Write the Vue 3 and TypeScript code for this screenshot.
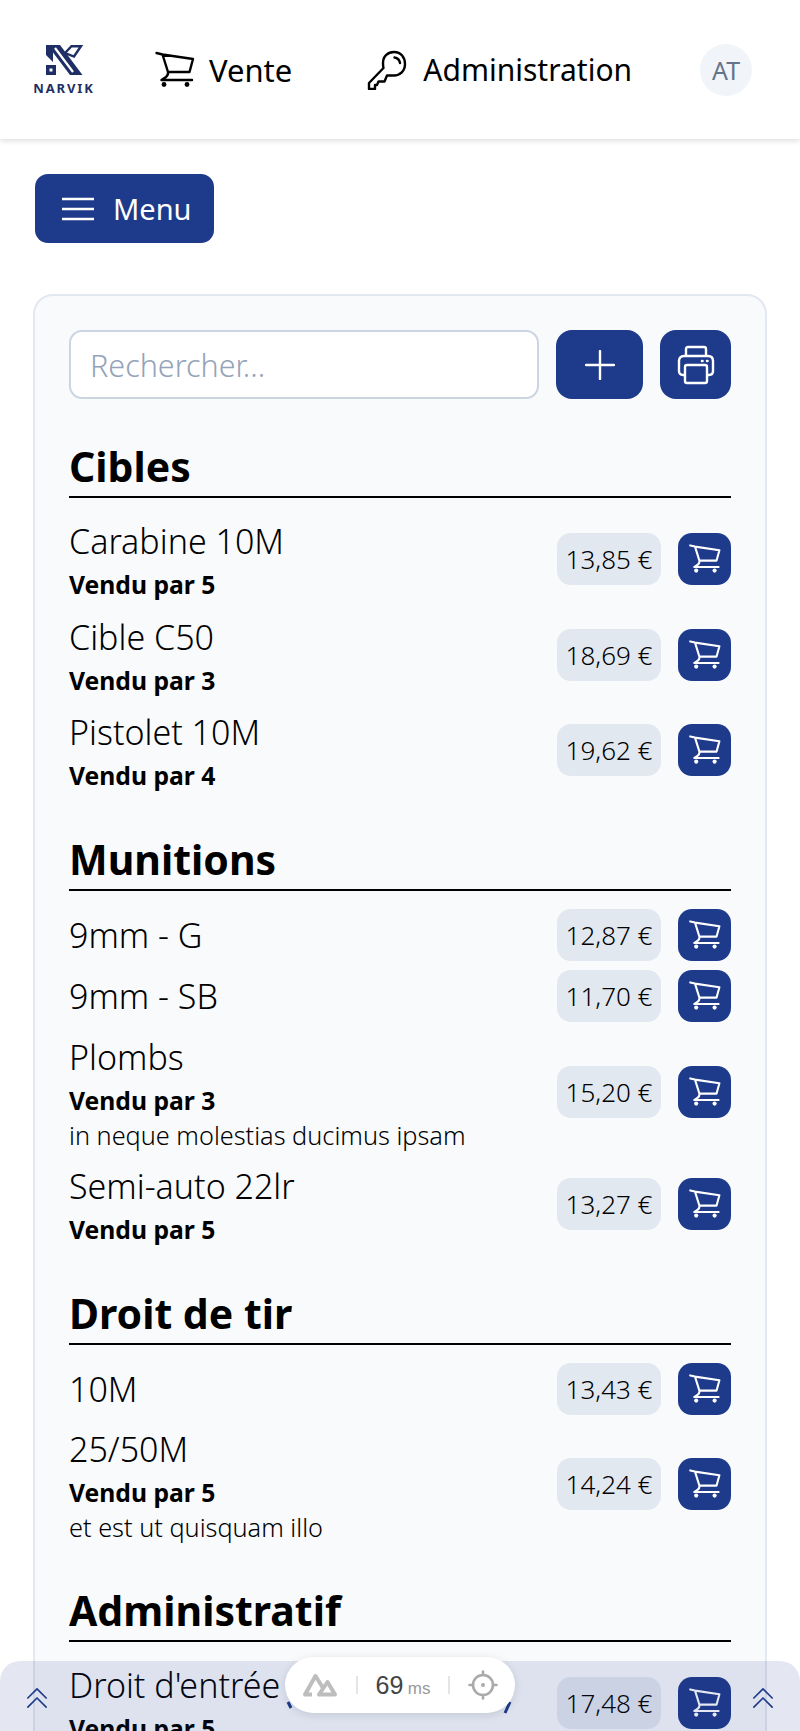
<script setup lang="ts">
interface Product {
  name: string
  price: string
  lot?: number
  note?: string
}

const sections: { title: string; items: Product[] }[] = [
  {
    title: 'Cibles',
    items: [
      { name: 'Carabine 10M', price: '13,85 €', lot: 5 },
      { name: 'Cible C50', price: '18,69 €', lot: 3 },
      { name: 'Pistolet 10M', price: '19,62 €', lot: 4 },
    ],
  },
  {
    title: 'Munitions',
    items: [
      { name: '9mm - G', price: '12,87 €' },
      { name: '9mm - SB', price: '11,70 €' },
      { name: 'Plombs', price: '15,20 €', lot: 3, note: 'in neque molestias ducimus ipsam' },
      { name: 'Semi-auto 22lr', price: '13,27 €', lot: 5 },
    ],
  },
  {
    title: 'Droit de tir',
    items: [
      { name: '10M', price: '13,43 €' },
      { name: '25/50M', price: '14,24 €', lot: 5, note: 'et est ut quisquam illo' },
    ],
  },
  {
    title: 'Administratif',
    items: [{ name: "Droit d'entrée", price: '17,48 €', lot: 5 }],
  },
]

const cartPath = 'M1.5 3 L7.5 4.5 L38 9 L34.5 22 H13 M7.5 4.5 L13 22 Q13.5 25 11 27 L6.5 30 H37'
</script>

<template>
  <div class="page">
    <header class="topbar">
      <div class="brand">
        <svg class="logo" viewBox="0 0 40 31" aria-hidden="true">
          <path d="M0 0 H14 L36.5 30 H24 L7 7.5 V17 L0 10 Z" fill="#1f2f66" />
          <path d="M9 3 L27 27" stroke="#fff" stroke-width="2.2" fill="none" />
          <path d="M0 20 H10 V30 H0 Z M3.5 23.5 V26.5 H6.5 V23.5 Z" fill="#1f2f66" fill-rule="evenodd" />
          <path d="M19 8 L25.5 1.2 H35 L28 11.5 Z" fill="none" stroke="#1f2f66" stroke-width="2.4" />
        </svg>
        <span class="brand-name">NARVIK</span>
      </div>
      <a class="nav-link nav-sale">
        <svg class="nav-icon" viewBox="0 0 40 40" fill="none" stroke="#000" stroke-width="2.4" stroke-linecap="round" stroke-linejoin="round">
          <path :d="cartPath" />
          <circle cx="9" cy="34.5" r="2.4" fill="#000" stroke="none" />
          <circle cx="32" cy="34.5" r="2.4" fill="#000" stroke="none" />
        </svg>
        Vente
      </a>
      <a class="nav-link nav-admin">
        <svg class="nav-icon" viewBox="17 9 40 40" fill="none" stroke="#000" stroke-width="2.4" stroke-linejoin="round" stroke-linecap="round">
          <path d="M33 22 C33 15 38 11 44 11 C51 11 55 16.5 55 23 C55 30 50 34.5 44 34.5 H37 L34.5 40.5 H28.5 L27 44 H25 V48 H19 V42 L33.5 27 C33 25 33 23 33 22 Z" />
          <path d="M44.5 16.5 C47.5 17 49.5 19 50 22" />
        </svg>
        Administration
      </a>
      <div class="avatar">AT</div>
    </header>

    <main class="content">
      <button class="menu-btn">
        <svg class="menu-icon" viewBox="0 0 32 24" fill="none" stroke="#fff" stroke-width="2.4">
          <path d="M0 2 H32 M0 12 H32 M0 22 H32" />
        </svg>
        Menu
      </button>

      <section class="card">
        <div class="toolbar">
          <input class="search" type="text" placeholder="Rechercher..." />
          <button class="tool-btn add">
            <svg width="30" height="30" viewBox="0 0 30 30" stroke="#fff" stroke-width="2.4" stroke-linecap="round">
              <path d="M15 1 V29 M1 15 H29" />
            </svg>
          </button>
          <button class="tool-btn print">
            <svg width="38" height="40" viewBox="0 0 38 40" fill="none" stroke="#fff" stroke-width="2.4" stroke-linejoin="round">
              <path d="M9 11 V4 Q9 2 11 2 H27 Q29 2 29 4 V11" />
              <path d="M8 30 H6 Q2 30 2 26 V16 Q2 11 7 11 H31 Q36 11 36 16 V26 Q36 30 32 30 H30" />
              <path d="M8 22 Q8 20 10 20 H28 Q30 20 30 22 V36 Q30 38 28 38 H10 Q8 38 8 36 Z" />
              <path d="M25 16 H25.5 M30 16 H30.5" stroke-linecap="round" stroke-width="2.6" />
            </svg>
          </button>
        </div>

        <div v-for="section in sections" :key="section.title" class="group">
          <h3 class="group-title">{{ section.title }}</h3>
          <div class="rows">
            <div v-for="item in section.items" :key="item.name" class="row">
              <div class="info">
                <div class="name">{{ item.name }}</div>
                <div v-if="item.lot" class="lot">Vendu par {{ item.lot }}</div>
                <div v-if="item.note" class="note">{{ item.note }}</div>
              </div>
              <div class="price">{{ item.price }}</div>
              <button class="cart-btn">
                <svg width="32" height="32" viewBox="0 0 40 40" fill="none" stroke="#fff" stroke-width="2.6" stroke-linecap="round" stroke-linejoin="round">
                  <path :d="cartPath" />
                  <circle cx="9" cy="34.5" r="2.6" fill="#fff" stroke="none" />
                  <circle cx="32" cy="34.5" r="2.6" fill="#fff" stroke="none" />
                </svg>
              </button>
            </div>
          </div>
        </div>
      </section>
    </main>

    <div class="scroll-bar">
      <svg class="chevrons" viewBox="0 0 24 24" fill="none" stroke="#1e3a8a" stroke-width="1.8" stroke-linecap="round" stroke-linejoin="round">
        <path d="M2 12 L12 2 L22 12 M2 22 L12 12 L22 22" />
      </svg>
      <svg class="chevrons" viewBox="0 0 24 24" fill="none" stroke="#1e3a8a" stroke-width="1.8" stroke-linecap="round" stroke-linejoin="round">
        <path d="M2 12 L12 2 L22 12 M2 22 L12 12 L22 22" />
      </svg>
    </div>

    <svg class="peek" width="800" height="40" viewBox="0 0 800 40" fill="none" stroke="#1e3a8a" stroke-width="3">
      <path d="M288 2 L291 8 M510 2 L505 13" />
    </svg>

    <div class="devtools">
      <svg width="36" height="26" viewBox="0 0 36 26" fill="none" stroke="#bdbdbd" stroke-width="4" stroke-linejoin="round">
        <path d="M10 22.5 H3 L13.5 4 L21 16" />
        <path d="M17 22.5 H33 L25.5 10 Z" />
      </svg>
      <span class="divider"></span>
      <span class="ms"><b>69</b> <i>ms</i></span>
      <span class="divider"></span>
      <svg width="30" height="30" viewBox="0 0 30 30" fill="none" stroke="#aaa" stroke-width="2.6" stroke-linecap="round">
        <circle cx="15" cy="15" r="10" />
        <circle cx="15" cy="15" r="2" fill="#aaa" stroke="none" />
        <path d="M15 1.5 V5 M15 25 V28.5 M1.5 15 H5 M25 15 H28.5" />
      </svg>
    </div>
  </div>
</template>

<style>
html,
body {
  margin: 0;
  background: #fff;
}
</style>

<style scoped>
.page {
  position: relative;
  height: 1731px;
  overflow: hidden;
  font-family: 'Noto Sans', 'Open Sans', sans-serif;
  color: #000;
}

.topbar {
  position: relative;
  display: flex;
  align-items: center;
  height: 139px;
  padding: 0 48px 0 33px;
  box-sizing: border-box;
  box-shadow: 0 1px 6px rgba(15, 23, 42, 0.18);
}

.brand {
  width: 62px;
  display: flex;
  flex-direction: column;
  align-items: center;
  gap: 5px;
}

.logo {
  width: 40px;
  height: 31px;
  margin-left: 4px;
}

.brand-name {
  font-size: 13px;
  line-height: 14px;
  font-weight: 700;
  letter-spacing: 1.9px;
  white-space: nowrap;
  color: #1f2f66;
}

.nav-link {
  display: flex;
  align-items: center;
  gap: 14px;
  font-size: 31px;
  line-height: 40px;
}

.nav-sale {
  margin-left: 60px;
}

.nav-admin {
  margin-left: 75px;
  gap: 16px;
  font-size: 30px;
}

.nav-icon {
  width: 40px;
  height: 40px;
  flex: none;
}

.avatar {
  margin-left: auto;
  width: 52px;
  height: 52px;
  border-radius: 50%;
  background: #f1f5f9;
  color: #64748b;
  font-size: 25px;
  display: flex;
  align-items: center;
  justify-content: center;
}

.content {
  padding: 35px 33px 0;
}

.menu-btn {
  display: flex;
  align-items: center;
  gap: 19px;
  margin-left: 2px;
  width: 179px;
  height: 69px;
  padding: 0 0 0 27px;
  border: none;
  border-radius: 13px;
  background: #1e3a8a;
  color: #fff;
  font: inherit;
  font-size: 29px;
}

.menu-icon {
  width: 32px;
  height: 24px;
  flex: none;
}

.card {
  margin-top: 51px;
  padding: 34px 34px 0;
  border: 2px solid #e2e8f0;
  border-radius: 20px;
  background: #f8fafc;
  height: 1600px;
  box-sizing: border-box;
}

.toolbar {
  display: flex;
  gap: 17px;
  height: 69px;
  margin-bottom: 37px;
}

.search {
  flex: 1;
  min-width: 0;
  height: 69px;
  box-sizing: border-box;
  padding: 0 19px;
  border: 2px solid #cbd5e1;
  border-radius: 13px;
  background: #fff;
  font: inherit;
  font-size: 30.5px;
  font-weight: 300;
}

.search::placeholder {
  color: #94a3b8;
}

.tool-btn {
  display: flex;
  align-items: center;
  justify-content: center;
  height: 69px;
  padding: 0;
  border: none;
  border-radius: 16px;
  background: #1e3a8a;
}

.add {
  width: 87px;
}

.print {
  width: 71px;
}

.group + .group {
  margin-top: 35.5px;
}

.group-title {
  margin: 0 0 18px;
  height: 60px;
  border-bottom: 2px solid #000;
  font-size: 41px;
  line-height: 60px;
  font-weight: 700;
}

.rows {
  display: flex;
  flex-direction: column;
  gap: 9.5px;
}

.row {
  display: flex;
  align-items: center;
  min-height: 52px;
}

.info {
  flex: 1;
  min-width: 0;
}

.name {
  padding-top: 1px;
  font-size: 34px;
  line-height: 49px;
  font-weight: 300;
}

.lot {
  padding-top: 2px;
  font-size: 24.7px;
  line-height: 34px;
  font-weight: 700;
}

.note {
  font-size: 25.3px;
  line-height: 34px;
  font-weight: 300;
}

.price {
  width: 104px;
  height: 52px;
  border-radius: 14px;
  background: #e2e8f0;
  font-size: 26px;
  line-height: 52px;
  text-align: center;
  font-weight: 300;
}

.cart-btn {
  display: flex;
  align-items: center;
  justify-content: center;
  margin-left: 17px;
  width: 53px;
  height: 52px;
  padding: 0;
  border: none;
  border-radius: 14px;
  background: #1e3a8a;
}

.scroll-bar {
  position: absolute;
  left: 0;
  right: 0;
  top: 1661px;
  height: 70px;
  box-sizing: border-box;
  padding: 0 26px;
  display: flex;
  align-items: flex-start;
  justify-content: space-between;
  border-radius: 20px 20px 0 0;
  background: rgba(30, 58, 138, 0.12);
}

.chevrons {
  width: 22px;
  height: 22px;
  margin-top: 26px;
}

.peek {
  position: absolute;
  left: 0;
  top: 1700px;
}

.devtools {
  position: absolute;
  left: 285px;
  top: 1657px;
  width: 230px;
  height: 56px;
  box-sizing: border-box;
  padding: 0 17px;
  display: flex;
  align-items: center;
  justify-content: space-between;
  border-radius: 28px;
  background: #fff;
  box-shadow: 0 2px 8px rgba(15, 23, 42, 0.12);
  font-family: 'Liberation Sans', Arial, sans-serif;
}

.divider {
  width: 2px;
  height: 18px;
  background: #e5e5e5;
}

.ms b {
  font-weight: 400;
  font-size: 25px;
  color: #444;
}

.ms i {
  font-style: normal;
  font-size: 17px;
  color: #999;
}
</style>
